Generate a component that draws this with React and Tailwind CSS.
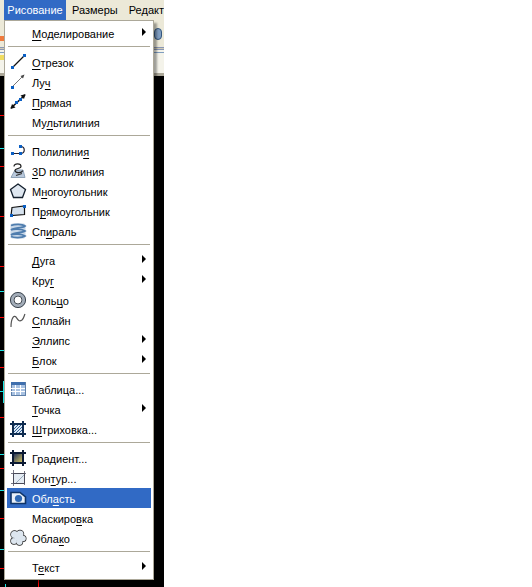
const FONT = { fontFamily: '"Liberation Sans", Arial, sans-serif' };

const Sq = ({ x, y, c = '#0a5fc4' }) => <rect x={x} y={y} width="3" height="3" fill={c} shapeRendering="crispEdges" />;

const Icon = ({ children }) => (
  <svg width="16" height="16" viewBox="0 0 16 16" className="shrink-0 overflow-visible">
    {children}
  </svg>
);

const cloudLobes = [[4.5, 4.5, 3.5], [10, 4, 3.5], [13, 8.5, 2.8], [9.5, 12, 3], [4, 11, 3]];

const icons = {
  line: (
    <Icon>
      <path d="M2.5 13.5L14 2" stroke="#111" strokeWidth="1.2" />
      <Sq x={1} y={12} />
      <Sq x={13} y={0} />
    </Icon>
  ),
  ray: (
    <Icon>
      <path d="M3 12L13 2" stroke="#777" strokeWidth="1" />
      <path d="M14.5 0.5L10.5 2L13 4.5Z" fill="#444" />
      <Sq x={1} y={12} />
    </Icon>
  ),
  xline: (
    <Icon>
      <path d="M1 14L15 1" stroke="#111" strokeWidth="1.6" />
      <path d="M15.5 0L10.5 1.5L14 5Z" fill="#111" />
      <path d="M0.5 15L5.5 13.5L2 10Z" fill="#111" />
      <Sq x={5} y={7} />
      <Sq x={9} y={4} />
    </Icon>
  ),
  pline: (
    <Icon>
      <path d="M2 10.5H10.5M10.5 3.5C15.5 3.5 15.5 10.5 10.5 10.5" stroke="#223" strokeWidth="1.2" fill="none" />
      <Sq x={1} y={9} />
      <Sq x={9} y={9} />
      <Sq x={9} y={2} />
    </Icon>
  ),
  d3: (
    <Icon>
      <path d="M1 14.5L5 7H13L15 14.5Z" fill="#b9c9dc" stroke="#8fa3b8" />
      <path d="M4 3.5C4 0 11 0 11 3.5C11 6 5 5 5 7.5C5 10.5 12.5 10 12.5 7.5" stroke="#222" strokeWidth="1.2" fill="none" />
      <path d="M6 12.5L12 10.5" stroke="#333" strokeWidth="1.2" />
    </Icon>
  ),
  polygon: (
    <Icon>
      <path d="M8 1L15.5 6.5L12.5 14.5H3.5L0.5 6.5Z" fill="#dfe7f0" stroke="#14202e" strokeWidth="1.3" />
    </Icon>
  ),
  rect: (
    <Icon>
      <path d="M2 4.5L14.5 3V11.5L1 12.5Z" fill="#d6e2ee" stroke="#111" strokeWidth="1.2" />
      <Sq x={13} y={2} />
      <Sq x={0} y={11} />
    </Icon>
  ),
  spiral: (
    <Icon>
      <rect x="0.5" y="0.5" width="15" height="15" fill="#c9d8e8" rx="2" />
      <path d="M1 2.5C5 1 12 1 15 3C12 5.5 4 4.5 1 7C4 5.5 12 6 15 8C12 10 4 9.5 1 12C4 10.5 12 11 15 13C12 15 4 15 1 13.5" fill="none" stroke="#4f7dae" strokeWidth="1.8" />
    </Icon>
  ),
  donut: (
    <Icon>
      <circle cx="8" cy="8" r="6" fill="none" stroke="#a3adb9" strokeWidth="3.4" />
      <circle cx="8" cy="8" r="7.6" fill="none" stroke="#2d3540" strokeWidth="0.9" />
      <circle cx="8" cy="8" r="4" fill="#fff" stroke="#2d3540" strokeWidth="0.9" />
    </Icon>
  ),
  spline: (
    <Icon>
      <path d="M1 15C1 6 4 3 6 5C8 8 9 10 12 8C14 6 14 4 15 2" fill="none" stroke="#555" strokeWidth="1.2" />
    </Icon>
  ),
  table: (
    <Icon>
      <rect x="1" y="1" width="14" height="13" fill="#a9c2e2" stroke="#5e7fa8" shapeRendering="crispEdges" />
      <rect x="1" y="1" width="14" height="3" fill="#3f6fae" shapeRendering="crispEdges" />
      <path d="M5.5 4V14M10.5 4V14M1 7.5H15M1 10.5H15" stroke="#fff" shapeRendering="crispEdges" />
    </Icon>
  ),
  hatch: (
    <Icon>
      <rect x="3" y="3" width="10" height="10" fill="#dbe7f3" />
      <path d="M3 6L6 3M3 9L9 3M3 12L12 3M5 13L13 5M8 13L13 8M11 13L13 11" stroke="#2d5f96" />
      <path d="M0 3H16M0 13H16M3 0V16M13 0V16" stroke="#0e2c50" strokeWidth="1.4" shapeRendering="crispEdges" />
    </Icon>
  ),
  gradient: (
    <Icon>
      <defs>
        <linearGradient id="grad-fill" x1="0" y1="0" x2="1" y2="1">
          <stop offset="0" stopColor="#14245a" />
          <stop offset="1" stopColor="#e0d060" />
        </linearGradient>
      </defs>
      <rect x="3" y="3" width="10" height="10" fill="url(#grad-fill)" />
      <path d="M0 3H16M0 13H16M3 0V16M13 0V16" stroke="#0c1a34" strokeWidth="1.6" shapeRendering="crispEdges" />
    </Icon>
  ),
  boundary: (
    <Icon>
      <rect x="3" y="3" width="11" height="10" fill="#e4ebf3" stroke="#222" shapeRendering="crispEdges" />
      <path d="M1 3H16M1 13H15M3 0V16M14 1V15" stroke="#556" strokeWidth="0.8" shapeRendering="crispEdges" />
      <path d="M6 13L14 5" stroke="#9ab" />
    </Icon>
  ),
  region: (
    <Icon>
      <path d="M1 2.5H10L15.5 7V13.5H1Z" fill="#e9f0f8" stroke="#0f3468" strokeWidth="1.6" />
      <circle cx="8.5" cy="8.5" r="3.6" fill="#2e68b4" />
    </Icon>
  ),
  cloud: (
    <Icon>
      {cloudLobes.map(([cx, cy, r]) => (
        <circle key={cx} cx={cx} cy={cy} r={r} fill="#222" stroke="#222" strokeWidth="1.4" />
      ))}
      {cloudLobes.map(([cx, cy, r]) => (
        <circle key={cx} cx={cx} cy={cy} r={r} fill="#dde6ef" />
      ))}
      <rect x="5" y="5" width="6" height="5" fill="#dde6ef" />
    </Icon>
  ),
};

const Label = ({ pre = '', u, post = '', active }) => (
  <span className={`text-[11px] leading-none whitespace-nowrap ${active ? 'text-white' : 'text-black'}`}>
    {pre}
    <span className="underline underline-offset-[2px]">{u}</span>
    {post}
  </span>
);

const Row = ({ icon, pre, u, post, sub, active }) => (
  <div className={`h-5 mx-[2px] flex items-center pl-[3px] pr-[5px] ${active ? 'bg-[#316ac5]' : ''}`}>
    <div className="w-4 h-4 shrink-0 flex items-center justify-center">{icon && icons[icon]}</div>
    <div className="ml-[6px] flex-1">
      <Label pre={pre} u={u} post={post} active={active} />
    </div>
    {sub && <div className="w-0 h-0 border-y-[4px] border-y-transparent border-l-[4px] border-l-black -mt-[2px]" />}
  </div>
);

const Sep = () => (
  <div className="h-[9px] pt-[3px] mx-[3px]">
    <div className="h-px bg-[#aca899]" />
  </div>
);

const groups = [
  [{ u: 'М', post: 'оделирование', sub: true }],
  [
    { icon: 'line', u: 'О', post: 'трезок' },
    { icon: 'ray', pre: 'Лу', u: 'ч' },
    { icon: 'xline', u: 'П', post: 'рямая' },
    { pre: 'Му', u: 'л', post: 'ьтилиния' },
  ],
  [
    { icon: 'pline', pre: 'Полилини', u: 'я' },
    { icon: 'd3', u: '3', post: 'D полилиния' },
    { icon: 'polygon', pre: 'М', u: 'н', post: 'огоугольник' },
    { icon: 'rect', pre: 'П', u: 'р', post: 'ямоугольник' },
    { icon: 'spiral', pre: 'Сп', u: 'и', post: 'раль' },
  ],
  [
    { u: 'Д', post: 'уга', sub: true },
    { pre: 'Кру', u: 'г', sub: true },
    { icon: 'donut', pre: 'Коль', u: 'ц', post: 'о' },
    { icon: 'spline', u: 'С', post: 'плайн' },
    { u: 'Э', post: 'ллипс', sub: true },
    { u: 'Б', post: 'лок', sub: true },
  ],
  [
    { icon: 'table', pre: 'Таблица...', u: '' },
    { u: 'Т', post: 'очка', sub: true },
    { icon: 'hatch', u: 'Ш', post: 'триховка...' },
  ],
  [
    { icon: 'gradient', pre: 'Градиент...', u: '' },
    { icon: 'boundary', pre: 'Кон', u: 'т', post: 'ур...' },
    { icon: 'region', pre: 'Обл', u: 'а', post: 'сть', active: true },
    { pre: 'Маскиро', u: 'в', post: 'ка' },
    { icon: 'cloud', pre: 'Обла', u: 'к', post: 'о' },
  ],
  [{ pre: 'Т', u: 'е', post: 'кст', sub: true }],
];

// red and cyan ticks of the drawing that show left of the open menu
const ticks = [
  [115, '#ff0000'], [148, '#19e6e6'], [166, '#ff0000'], [216, '#ff0000'], [266, '#ff0000'],
  [291, '#19e6e6'], [317, '#ff0000'], [350, '#19e6e6'], [367, '#ff0000'], [391, '#19e6e6'],
  [417, '#ff0000'], [454, '#19e6e6'], [468, '#ff0000'], [490, '#19e6e6'], [518, '#ff0000'],
  [549, '#19e6e6'], [568, '#ff0000'],
];

export default function App() {
  return (
    <div className="w-[532px] h-[587px] bg-white overflow-hidden" style={FONT}>
      <div className="w-[164px] h-[587px] relative overflow-hidden bg-black flex flex-col">
        {/* menu bar */}
        <div className="h-5 shrink-0 bg-[#ece9d8] flex items-center pl-1 text-[11px] text-black whitespace-nowrap">
          <div className="h-5 w-16 bg-[#316ac5] text-white flex items-center justify-center">Рисование</div>
          <div className="ml-[6px]">Размеры</div>
          <div className="ml-[11px]">Редакт</div>
        </div>

        {/* toolbars behind the menu */}
        <div className="h-[27px] shrink-0 bg-[#ece9d8] flex justify-between items-center">
          <div className="w-[5px] h-[5px] bg-[#f07a3c] mt-[10px]" />
          <div className="w-[8px] h-[12px] mr-[2px] rounded-full bg-[#7f9dc0] border border-[#34577f]" />
        </div>
        <div className="h-[3px] shrink-0 bg-[#cfcbb5] border-y border-[#8a96b4]" />
        <div className="h-[26px] shrink-0 bg-[#f4f3ea] flex flex-col justify-between">
          <div className="h-px mt-[2px] bg-[#7f9dc0]" />
          <div className="h-[3px] bg-[#aca899]" />
        </div>

        {/* drawing area */}
        <div className="flex-1 bg-black" />
        <div className="absolute left-0 top-[55px] w-1 h-[5px] bg-[#f0dc60]" />
        {ticks.map(([y, c]) => (
          <div key={y} className="absolute left-0 w-1 h-px" style={{ top: y, backgroundColor: c }} />
        ))}
        <div className="absolute left-[3px] top-[381px] w-px h-[22px] bg-[#19e6e6]" />
        <div className="absolute left-[5px] top-[584px] w-px h-[3px] bg-[#19e6e6]" />
        <div className="absolute left-[38px] top-[579px] w-px h-2 bg-[#ff0000]" />

        {/* open menu */}
        <div className="absolute left-1 top-5 w-[150px] h-[560px] bg-white border border-[#aca899] pt-[2px] shadow-[3px_3px_2px_rgba(0,0,0,0.35)]">
          {groups.map((rows, i) => (
            <div key={i}>
              {i > 0 && <Sep />}
              {rows.map((r) => (
                <Row key={(r.pre || '') + (r.u || '') + (r.post || '')} {...r} />
              ))}
            </div>
          ))}
        </div>
      </div>
    </div>
  );
}
